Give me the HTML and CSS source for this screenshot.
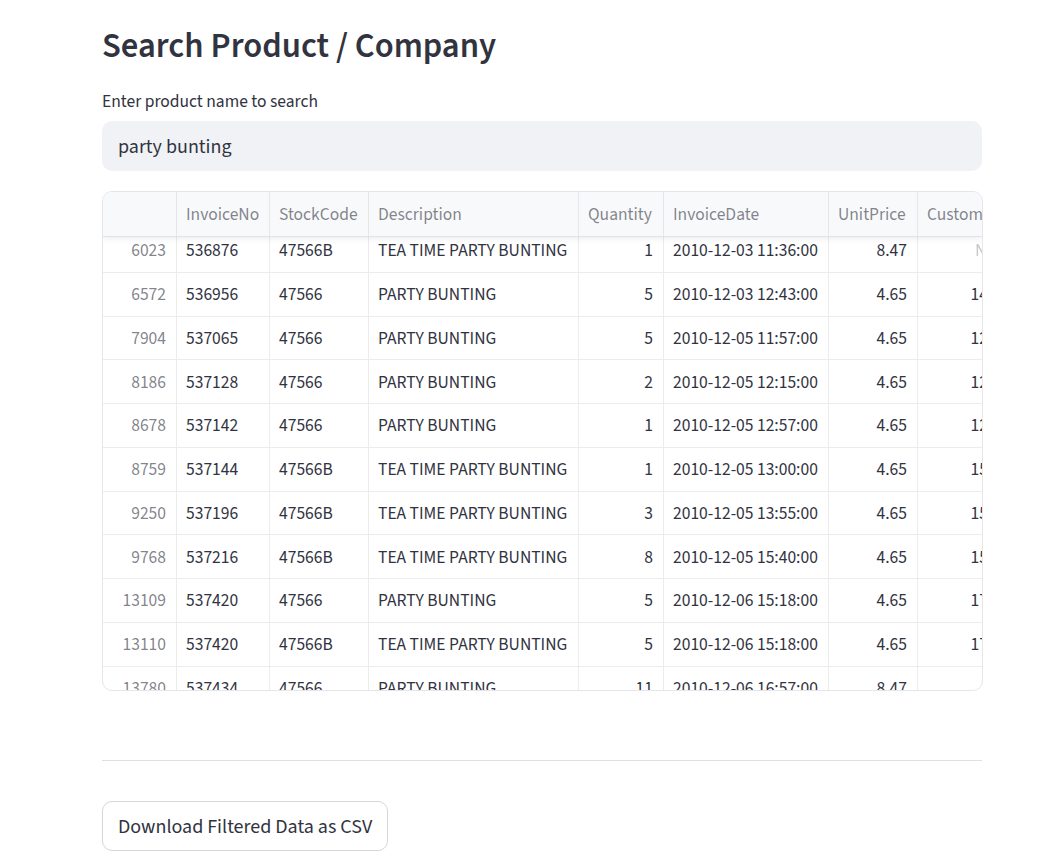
FILE: index.html
```html
<!DOCTYPE html>
<html lang="en">
<head>
<meta charset="utf-8">
<title>Search Product / Company</title>
<link rel="stylesheet" href="styles.css">
</head>
<body>
<main class="main">
  <h2 class="title">Search Product / Company</h2>
  <label class="label" for="q">Enter product name to search</label>
  <div class="input"><input id="q" type="text" value="party bunting"></div>

  <div class="grid">
    <div class="ghead">
      <div class="cell idx"></div>
      <div class="cell">InvoiceNo</div>
      <div class="cell">StockCode</div>
      <div class="cell">Description</div>
      <div class="cell">Quantity</div>
      <div class="cell">InvoiceDate</div>
      <div class="cell">UnitPrice</div>
      <div class="cell">CustomerID</div>
    </div>
    <div class="gbody">
      <div class="rows">
        <div class="row"><div class="cell idx">6023</div><div class="cell">536876</div><div class="cell">47566B</div><div class="cell">TEA TIME PARTY BUNTING</div><div class="cell num">1</div><div class="cell">2010-12-03 11:36:00</div><div class="cell num">8.47</div><div class="cell num none">None</div></div>
        <div class="row"><div class="cell idx">6572</div><div class="cell">536956</div><div class="cell">47566</div><div class="cell">PARTY BUNTING</div><div class="cell num">5</div><div class="cell">2010-12-03 12:43:00</div><div class="cell num">4.65</div><div class="cell num">14688</div></div>
        <div class="row"><div class="cell idx">7904</div><div class="cell">537065</div><div class="cell">47566</div><div class="cell">PARTY BUNTING</div><div class="cell num">5</div><div class="cell">2010-12-05 11:57:00</div><div class="cell num">4.65</div><div class="cell num">12471</div></div>
        <div class="row"><div class="cell idx">8186</div><div class="cell">537128</div><div class="cell">47566</div><div class="cell">PARTY BUNTING</div><div class="cell num">2</div><div class="cell">2010-12-05 12:15:00</div><div class="cell num">4.65</div><div class="cell num">12567</div></div>
        <div class="row"><div class="cell idx">8678</div><div class="cell">537142</div><div class="cell">47566</div><div class="cell">PARTY BUNTING</div><div class="cell num">1</div><div class="cell">2010-12-05 12:57:00</div><div class="cell num">4.65</div><div class="cell num">12423</div></div>
        <div class="row"><div class="cell idx">8759</div><div class="cell">537144</div><div class="cell">47566B</div><div class="cell">TEA TIME PARTY BUNTING</div><div class="cell num">1</div><div class="cell">2010-12-05 13:00:00</div><div class="cell num">4.65</div><div class="cell num">15311</div></div>
        <div class="row"><div class="cell idx">9250</div><div class="cell">537196</div><div class="cell">47566B</div><div class="cell">TEA TIME PARTY BUNTING</div><div class="cell num">3</div><div class="cell">2010-12-05 13:55:00</div><div class="cell num">4.65</div><div class="cell num">15601</div></div>
        <div class="row"><div class="cell idx">9768</div><div class="cell">537216</div><div class="cell">47566B</div><div class="cell">TEA TIME PARTY BUNTING</div><div class="cell num">8</div><div class="cell">2010-12-05 15:40:00</div><div class="cell num">4.65</div><div class="cell num">15581</div></div>
        <div class="row"><div class="cell idx">13109</div><div class="cell">537420</div><div class="cell">47566</div><div class="cell">PARTY BUNTING</div><div class="cell num">5</div><div class="cell">2010-12-06 15:18:00</div><div class="cell num">4.65</div><div class="cell num">17841</div></div>
        <div class="row"><div class="cell idx">13110</div><div class="cell">537420</div><div class="cell">47566B</div><div class="cell">TEA TIME PARTY BUNTING</div><div class="cell num">5</div><div class="cell">2010-12-06 15:18:00</div><div class="cell num">4.65</div><div class="cell num">17841</div></div>
        <div class="row"><div class="cell idx">13780</div><div class="cell">537434</div><div class="cell">47566</div><div class="cell">PARTY BUNTING</div><div class="cell num">11</div><div class="cell">2010-12-06 16:57:00</div><div class="cell num">8.47</div><div class="cell num"></div></div>
      </div>
    </div>
  </div>

  <hr class="divider">
  <button class="btn" type="button">Download Filtered Data as CSV</button>
</main>
</body>
</html>
```
FILE: styles.css
```css
* { box-sizing: border-box; }
html, body { margin: 0; padding: 0; background: #ffffff; }
body {
  font-family: "Source Sans 3", "Source Sans Pro", Lato, sans-serif;
  color: rgb(49, 51, 63);
  overflow: hidden;
  height: 851px;
}
.main {
  width: 880px;
  margin-left: 102px;
  display: flex;
  flex-direction: column;
  align-items: flex-start;
}
.title {
  margin: 26px 0 0 0;
  font-size: 34.6px;
  line-height: 41px;
  font-weight: 600;
  letter-spacing: 0;
}
.label {
  margin-top: 22px;
  font-size: 17.5px;
  line-height: 26px;
}
.input {
  margin-top: 6px;
  width: 880px;
  height: 50px;
  background: rgb(240, 242, 246);
  border-radius: 10px;
  display: flex;
  align-items: center;
}
.input input {
  border: 0;
  outline: 0;
  background: transparent;
  font: inherit;
  font-size: 20px;
  color: rgb(49, 51, 63);
  padding: 2px 16px 0 16px;
  width: 100%;
  height: 100%;
}
.grid {
  margin-top: 20px;
  width: 881px;
  height: 500px;
  border: 1px solid #e6e6ea;
  border-radius: 10px;
  overflow: hidden;
  display: flex;
  flex-direction: column;
  font-size: 17.5px;
}
.ghead, .row {
  display: grid;
  grid-template-columns: 74px 93px 99px 210px 85px 165px 89px 107px;
  flex: none;
}
.ghead {
  height: 45px;
  background: #f8f9fb;
  border-bottom: 1px solid #e2e3e7;
  color: rgba(49, 51, 63, 0.6);
  position: relative;
  z-index: 1;
  box-shadow: 0 1px 7px rgba(0, 0, 0, 0.09);
}
.ghead .idx { background: #f8f9fb; }
.gbody {
  flex: 1;
  overflow: hidden;
}
.rows { margin-top: -8px; }
.row {
  height: 43.75px;
  border-bottom: 1px solid #ececef;
}
.cell {
  border-right: 1px solid #ececef;
  padding: 1px 10px 0 9px;
  white-space: nowrap;
  overflow: hidden;
  display: flex;
  align-items: center;
}
.ghead .cell { border-right-color: #e6e6ea; }
.num { justify-content: flex-end; }
.idx {
  justify-content: flex-end;
  color: rgba(49, 51, 63, 0.62);
}
.none { color: rgba(49, 51, 63, 0.3); }
.divider {
  margin: 69px 0 0 0;
  width: 880px;
  border: 0;
  border-top: 1px solid #e0e0e3;
  height: 0;
}
.btn {
  margin-top: 40px;
  height: 50px;
  padding: 2px 15px 0 15px;
  background: #ffffff;
  border: 1px solid #d5d6da;
  border-radius: 10px;
  font: inherit;
  font-size: 20px;
  color: rgb(49, 51, 63);
}
```
